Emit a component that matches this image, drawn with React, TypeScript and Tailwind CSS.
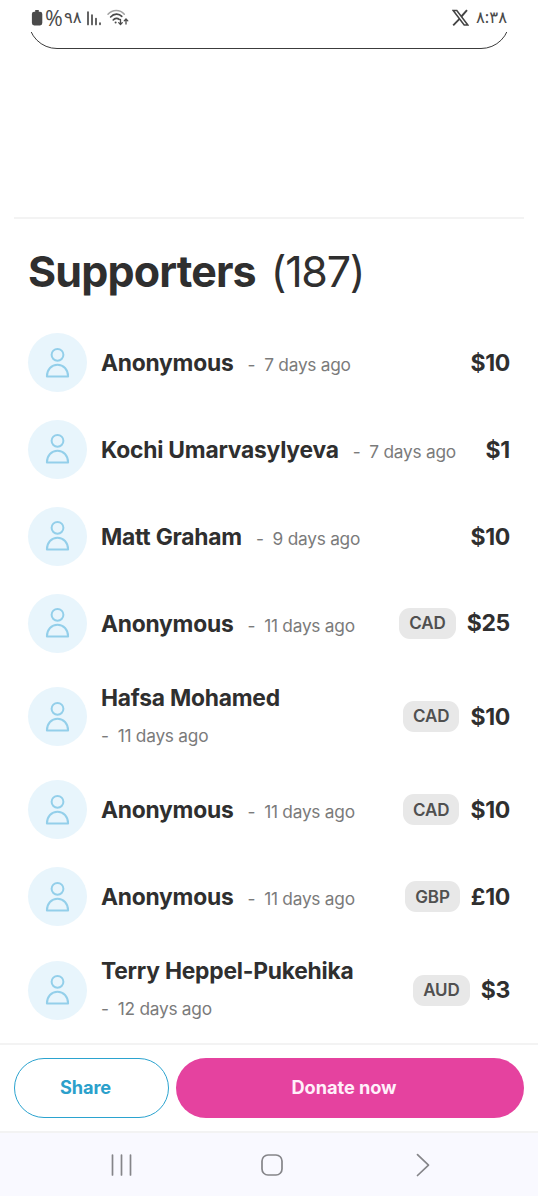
import React from "react";

type Supporter = {
  name: string;
  when: string;
  amount: string;
  currency?: string;
  stacked?: boolean;
};

const supporters: Supporter[] = [
  { name: "Anonymous", when: "7 days ago", amount: "$10" },
  { name: "Kochi Umarvasylyeva", when: "7 days ago", amount: "$1" },
  { name: "Matt Graham", when: "9 days ago", amount: "$10" },
  { name: "Anonymous", when: "11 days ago", amount: "$25", currency: "CAD" },
  { name: "Hafsa Mohamed", when: "11 days ago", amount: "$10", currency: "CAD", stacked: true },
  { name: "Anonymous", when: "11 days ago", amount: "$10", currency: "CAD" },
  { name: "Anonymous", when: "11 days ago", amount: "£10", currency: "GBP" },
  { name: "Terry Heppel-Pukehika", when: "12 days ago", amount: "$3", currency: "AUD", stacked: true },
];

function StatusBar() {
  return (
    <header
      dir="ltr"
      className="flex h-8 shrink-0 items-start justify-between pl-[31px] pr-[31px] pt-[9px] font-['Noto_Sans','DejaVu_Sans',sans-serif] text-[#4a4a4a]"
    >
      <div className="flex items-start">
        <svg width="13" height="18" viewBox="0 0 13 18" fill="#4a4a4a" className="block">
          <path d="M4.200 1h3.600v1.800H9a2.300 2.300 0 0 1 2.300 2.300v9A2.300 2.300 0 0 1 9 16.400H3.200A2.300 2.300 0 0 1 .9 14.100v-9a2.300 2.300 0 0 1 2.300-2.300h1z" />
        </svg>
        <span className="ml-[1px] w-[19px] font-['Open_Sans',sans-serif] text-[21.500px] leading-[17px]">%</span>
        <bdo dir="ltr" className="w-[17px] text-[16.500px] leading-[15px]">٩٨</bdo>
        <svg width="16" height="18" viewBox="0 0 16 18" fill="none" stroke="#4a4a4a" strokeWidth="1.700" strokeLinecap="round" className="ml-[5px] block">
          <path d="M2 3v12.500M6 6v9.500M10 9.500v6M14 14v1.300" />
        </svg>
        <svg width="24" height="18" viewBox="0 0 24 18" fill="none" strokeLinecap="round" className="ml-[4px] block">
          <path d="M2 5.200C6.500.2 14 .2 18.300 5.200" stroke="#a3a3a3" strokeWidth="1.500" />
          <path d="M4.600 8C8 4.300 13 4.300 15.800 7.400M7.200 11c1.700-2 4.200-2.200 6-.6" stroke="#4a4a4a" strokeWidth="1.600" />
          <circle cx="9.600" cy="13.500" r="1" fill="#4a4a4a" />
          <path d="M14.500 10.500v5m-1.800-1.900 1.800 1.900 1.800-1.900M20 15v-5m-1.800 1.900L20 10l1.800 1.900" stroke="#4a4a4a" strokeWidth="1.300" />
        </svg>
      </div>
      <div className="flex items-start">
        <svg width="17" height="17" viewBox="0 0 17 17" fill="none" stroke="#444" className="block">
          <path d="M1.200 1.500h3.600l11 14.500h-3.600z" strokeWidth="1.500" />
          <path d="M15 1.100 9.400 7.500M7.500 9.800 1.200 16.300" strokeWidth="1.900" />
        </svg>
        <bdo dir="ltr" className="ml-[7px] w-[31px] whitespace-nowrap text-[16.500px] leading-[15px]">٨:٣٨</bdo>
      </div>
    </header>
  );
}

function Avatar() {
  return (
    <span className="flex size-[59px] shrink-0 items-center justify-center rounded-full bg-[#e8f5fc]">
      <svg width="26" height="32" viewBox="0 0 26 32" fill="none" stroke="#93cfea" strokeWidth="2" strokeLinejoin="round">
        <circle cx="12.500" cy="7.800" r="5.900" />
        <path d="M1.900 29.500C1.900 22.500 6.500 17.800 12.500 17.800s10.600 4.700 10.600 11.700z" />
      </svg>
    </span>
  );
}

function SupporterRow({ name, when, amount, currency, stacked }: Supporter) {
  return (
    <li className={`flex items-center ${stacked ? "h-[72px]" : "h-[59px]"}`}>
      <Avatar />
      <div
        className={
          stacked
            ? "ml-[14px] flex flex-1 flex-col pt-px"
            : "ml-[14px] flex flex-1 items-baseline gap-[14px] pt-[4px]"
        }
      >
        <span className="whitespace-nowrap text-[22.800px] font-bold leading-[36px] tracking-[-0.22px]">{name}</span>
        <span className="flex gap-[9px] whitespace-nowrap text-[17.300px] leading-[39px] tracking-[-0.25px] text-[#7b7b7b]">
          <span>-</span>
          <span>{when}</span>
        </span>
      </div>
      {currency && (
        <span className="mr-[11px] flex h-[31px] items-center rounded-[11px] bg-[#e8e8e8] px-[10px] pt-px text-[17px] font-semibold tracking-[-0.1px] text-[#505050]">
          {currency}
        </span>
      )}
      <span className="pt-px text-[23px] font-bold tracking-[-0.3px]">{amount}</span>
    </li>
  );
}

export default function App() {
  return (
    <div className="flex h-[1199px] w-[538px] flex-col overflow-hidden bg-white font-[Inter,sans-serif] text-[#2f2f2f]">
      <StatusBar />
      <main className="flex flex-1 flex-col">
        <div className="mx-7 flex h-[17px] flex-col justify-end overflow-hidden">
          <div className="h-[70px] shrink-0 rounded-[29px] border border-[#3c3c3c]" />
        </div>
        <hr className="mx-[14px] mt-[168px] border-t-2 border-[#f3f3f3]" />
        <h2 className="ml-7 mt-[25px] flex h-[54px] items-center gap-[15px] whitespace-nowrap text-[43px]">
          <span className="font-bold tracking-[-0.86px]">Supporters</span>
          <span className="font-normal tracking-[-1.3px]">(187)</span>
        </h2>
        <ul className="mx-7 mt-[35px] flex flex-col gap-[27.900px]">
          {supporters.map((s, i) => (
            <SupporterRow key={i} {...s} />
          ))}
        </ul>
      </main>
      <div className="flex h-[90px] shrink-0 gap-[7px] border-y-2 border-[#f3f3f3] px-[14px] pt-[13px]">
        <button className="h-[60px] w-[155px] rounded-full border border-[#2ba3cf] pr-[12px] text-[18.200px] font-bold tracking-[-0.1px] text-[#2ba0cb]">
          Share
        </button>
        <button className="h-[60px] flex-1 rounded-full bg-[#e5429f] pr-[12px] text-[18.200px] font-bold tracking-[-0.05px] text-[#fff0fa]">
          Donate now
        </button>
      </div>
      <nav className="mb-[3px] flex h-[63px] shrink-0 items-center justify-between bg-[#f9f9ff] pl-[110px] pr-[107px]">
        <svg width="24" height="24" viewBox="0 0 24 24" stroke="#858589" strokeWidth="1.700" strokeLinecap="round">
          <path d="M2.500 2v20M11.500 2v20M20.500 2v20" />
        </svg>
        <svg width="24" height="24" viewBox="0 0 24 24" fill="none" stroke="#858589" strokeWidth="1.700" className="mr-[6px]">
          <rect x="2" y="2" width="20" height="20" rx="6" />
        </svg>
        <svg width="16" height="24" viewBox="0 0 16 24" fill="none" stroke="#858589" strokeWidth="1.700" strokeLinecap="round" strokeLinejoin="round">
          <path d="m2.500 1.700 11 10.400-11 10.400" />
        </svg>
      </nav>
    </div>
  );
}
